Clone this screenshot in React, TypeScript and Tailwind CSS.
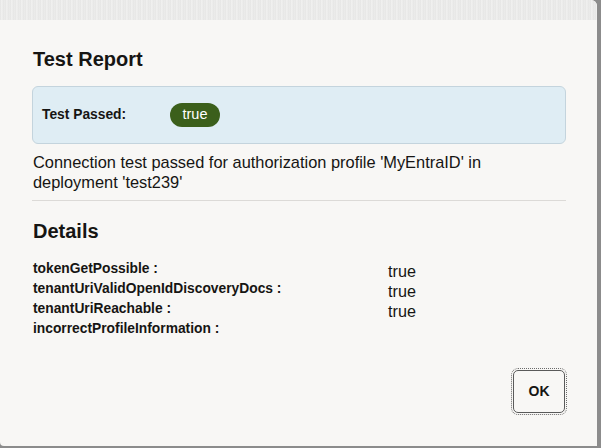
import React from "react";

const details: { label: string; value: string }[] = [
  { label: "tokenGetPossible :", value: "true" },
  { label: "tenantUriValidOpenIdDiscoveryDocs :", value: "true" },
  { label: "tenantUriReachable :", value: "true" },
  { label: "incorrectProfileInformation :", value: "" },
];

export default function App() {
  return (
    <div className="h-[448px] w-[601px] overflow-hidden bg-[#8c8c8c] font-['Liberation_Sans',Arial,sans-serif] text-[#161513]">
      <div className="flex h-[446px] w-[597px] flex-col overflow-hidden rounded-tr-[6px] rounded-bl-[4px] bg-[#f8f7f5]">
        {/* textured strip behind the dialog */}
        <div className="h-[20px] shrink-0 bg-[repeating-linear-gradient(90deg,#e4e4e3_0px,#f3f3f2_2px,#e6e6e5_3px,#ececeb_5px)]" />

        <div className="flex flex-1 flex-col px-[32px] pt-[27px]">
          <h2 className="pl-px text-[20px] font-bold leading-[24px]">Test Report</h2>

          <div className="mt-[15px] flex h-[58px] w-[534px] items-center rounded-[6px] border border-[#c4d4dd] bg-[#dfedf4] pl-[9px]">
            <span className="w-[128px] text-[13.8px] font-bold">Test Passed:</span>
            <span className="inline-flex h-[24px] w-[50px] items-center justify-center rounded-full bg-[#3b5f1b] text-[14.5px] text-white">
              true
            </span>
          </div>

          <p className="mt-[8px] max-w-[500px] pl-px text-[16.4px] leading-[20px]">
            Connection test passed for authorization profile 'MyEntraID' in deployment 'test239'
          </p>

          <div className="mt-[8px] h-px w-[534px] bg-[#dcdad7]" />

          <h2 className="mt-[18px] pl-px text-[20px] font-bold leading-[24px]">Details</h2>

          <div className="mt-[16px] grid grid-cols-[355px_1fr] pl-px">
            <div className="flex flex-col">
              {details.map((d) => (
                <span key={d.label} className="text-[13.8px] font-bold leading-[20px]">
                  {d.label}
                </span>
              ))}
            </div>
            <div className="flex flex-col pt-[2px]">
              {details
                .filter((d) => d.value)
                .map((d) => (
                  <span key={d.label} className="text-[16.2px] leading-[20px]">
                    {d.value}
                  </span>
                ))}
            </div>
          </div>

          <div className="mt-[29px] flex w-[535px] justify-end">
            <button
              type="button"
              className="mr-[2px] mt-[2px] h-[43px] w-[52px] rounded-[5px] border border-[#5a5a5a] text-[14px] font-bold outline-1 outline-offset-1 outline-dotted outline-[#6b6b6b]"
            >
              OK
            </button>
          </div>
        </div>
      </div>
    </div>
  );
}
